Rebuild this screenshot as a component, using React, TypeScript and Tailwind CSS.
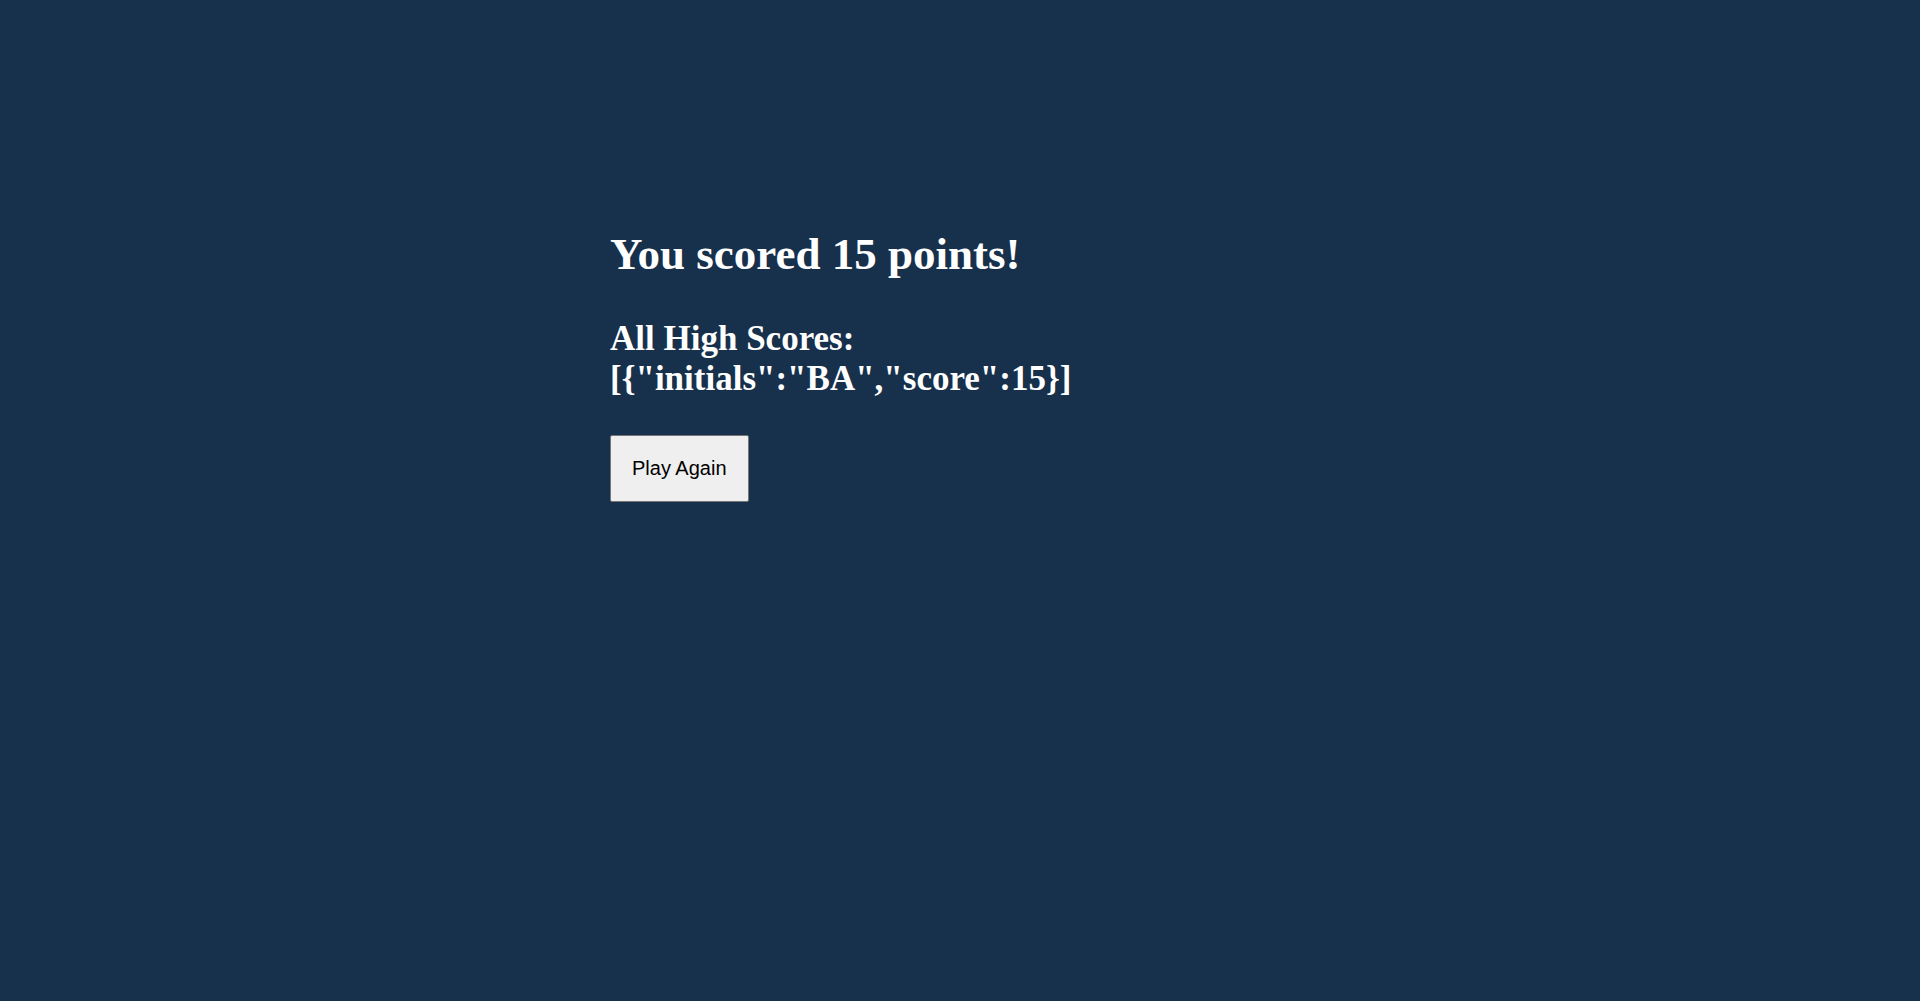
import React from "react";

export default function App() {
  return (
    <div className="min-h-[1001px] w-full bg-[#17304b]">
      <main className="mx-auto flex w-[700px] flex-col items-start pt-[229px] font-['Liberation_Serif','Times_New_Roman',serif]">
        <h1 className="text-[45px] font-bold leading-[1.15] text-white">
          You scored 15 points!
        </h1>
        <h2 className="mt-[38px] text-[35px] font-bold leading-[1.15] text-white">
          All High Scores:
          <br />
          {'[{"initials":"BA","score":15}]'}
        </h2>
        <button className="mt-[36px] rounded-[2px] border border-[#767676] bg-[#efefef] px-[21px] py-[21px] font-['Liberation_Sans',Arial,sans-serif] text-[20px] leading-[1.15] text-black">
          Play Again
        </button>
      </main>
    </div>
  );
}
